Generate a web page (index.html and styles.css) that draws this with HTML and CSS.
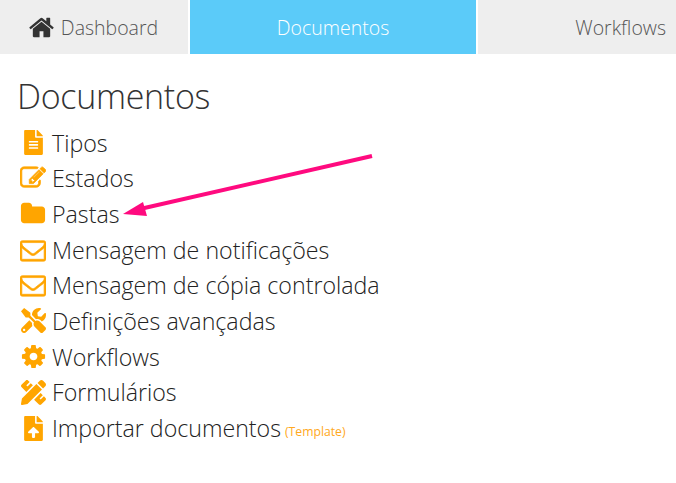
FILE: index.html
```html
<!DOCTYPE html>
<html lang="en">
<head>
  <meta charset="UTF-8" />
  <meta name="viewport" content="width=device-width, initial-scale=1.0" />
  <title>Documentos</title>
  <link rel="stylesheet" href="styles.css">
</head>
<body>
  <nav class="tabs">
    <a class="tab tab-first">
      <svg class="home-icon" viewBox="0 0 1792 1792"><path d="M1472 992v480q0 26-19 45t-45 19h-384v-384h-256v384h-384q-26 0-45-19t-19-45v-480q0-1 .5-3t.5-3l575-474 575 474q1 2 1 6zm223-69l-62 74q-8 9-21 11h-3q-13 0-21-7l-692-577-692 577q-12 8-24 7-13-2-21-11l-62-74q-8-10-7-23.5t11-21.5l719-599q32-26 76-26t76 26l244 204v-195q0-14 9-23t23-9h192q14 0 23 9t9 23v408l219 182q10 8 11 21.5t-7 23.5z"/></svg>
      Dashboard
    </a>
    <a class="tab active">Documentos</a>
    <a class="tab tab-last">Workflows</a>
  </nav>

  <div class="content">
    <h1>Documentos</h1>
    <ul class="menu">
      <li><span class="icon"><svg class="file" viewBox="0 0 384 512"><path d="M224 136V0H24C10.7 0 0 10.7 0 24v464c0 13.3 10.7 24 24 24h336c13.3 0 24-10.7 24-24V160H248c-13.2 0-24-10.8-24-24zm64 236c0 6.6-5.4 12-12 12H108c-6.6 0-12-5.4-12-12v-8c0-6.6 5.4-12 12-12h168c6.6 0 12 5.4 12 12v8zm0-64c0 6.6-5.4 12-12 12H108c-6.6 0-12-5.4-12-12v-8c0-6.6 5.4-12 12-12h168c6.6 0 12 5.4 12 12v8zm0-72v8c0 6.6-5.4 12-12 12H108c-6.6 0-12-5.4-12-12v-8c0-6.6 5.4-12 12-12h168c6.6 0 12 5.4 12 12zm96-114.1v6.1H256V0h6.1c6.4 0 12.5 2.5 17 7l97.9 98c4.5 4.5 7 10.6 7 16.9z"/></svg></span>Tipos</li>
      <li><span class="icon"><svg class="wide bold" viewBox="0 0 1792 1792"><path d="M888 1184l116-116-152-152-116 116v56h96v96h56zm440-720q-16-16-33 1l-350 350q-17 17-1 33t33-1l350-350q17-17 1-33zm80 594v190q0 119-84.5 203.5t-203.5 84.5h-832q-119 0-203.5-84.5t-84.5-203.5v-832q0-119 84.5-203.5t203.5-84.5h832q63 0 117 25 15 7 18 23 3 17-9 29l-49 49q-14 14-32 8-23-6-45-6h-832q-66 0-113 47t-47 113v832q0 66 47 113t113 47h832q66 0 113-47t47-113v-126q0-13 9-22l64-64q15-15 35-7t20 29zm-96-738l288 288-672 672h-288v-288zm444 132l-92 92-288-288 92-92q28-28 68-28t68 28l152 152q28 28 28 68t-28 68z"/></svg></span>Estados</li>
      <li><span class="icon"><svg class="wide" viewBox="0 0 1792 1792"><path d="M1728 608v704q0 92-66 158t-158 66h-1216q-92 0-158-66t-66-158v-960q0-92 66-158t158-66h320q92 0 158 66t66 158v32h672q92 0 158 66t66 158z"/></svg></span>Pastas</li>
      <li><span class="icon"><svg class="wide bold" viewBox="0 0 1792 1792"><path d="M1664 1504v-768q-32 36-69 66-268 206-426 338-51 43-83 67t-86.5 48.5-102.5 24.5h-2q-48 0-102.5-24.5t-86.5-48.5-83-67q-158-132-426-338-37-30-69-66v768q0 13 9.5 22.5t22.5 9.5h1472q13 0 22.5-9.5t9.5-22.5zm0-1051v-24.5l-.5-13-3-12.5-5.5-9-9-7.5-14-2.5h-1472q-13 0-22.5 9.5t-9.5 22.5q0 168 147 284 193 152 401 317 6 5 35 29.5t46 37.5 44.5 31.5 50.5 27.5 43 9h2q20 0 43-9t50.5-27.5 44.5-31.5 46-37.5 35-29.5q208-165 401-317 54-43 100.5-115.5t46.5-131.5zm128-37v1088q0 66-47 113t-113 47h-1472q-66 0-113-47t-47-113v-1088q0-66 47-113t113-47h1472q66 0 113 47t47 113z"/></svg></span>Mensagem de notificações</li>
      <li><span class="icon"><svg class="wide bold" viewBox="0 0 1792 1792"><path d="M1664 1504v-768q-32 36-69 66-268 206-426 338-51 43-83 67t-86.5 48.5-102.5 24.5h-2q-48 0-102.5-24.5t-86.5-48.5-83-67q-158-132-426-338-37-30-69-66v768q0 13 9.5 22.5t22.5 9.5h1472q13 0 22.5-9.5t9.5-22.5zm0-1051v-24.5l-.5-13-3-12.5-5.5-9-9-7.5-14-2.5h-1472q-13 0-22.5 9.5t-9.5 22.5q0 168 147 284 193 152 401 317 6 5 35 29.5t46 37.5 44.5 31.5 50.5 27.5 43 9h2q20 0 43-9t50.5-27.5 44.5-31.5 46-37.5 35-29.5q208-165 401-317 54-43 100.5-115.5t46.5-131.5zm128-37v1088q0 66-47 113t-113 47h-1472q-66 0-113-47t-47-113v-1088q0-66 47-113t113-47h1472q66 0 113 47t47 113z"/></svg></span>Mensagem de cópia controlada</li>
      <li><span class="icon"><svg class="file" viewBox="0 0 512 512"><path d="M501.1 395.7L384 278.6c-23.1-23.1-57.6-27.6-85.4-13.9L192 158.1V96L64 0 0 64l96 128h62.1l106.6 106.6c-13.6 27.8-9.2 62.3 13.9 85.4l117.1 117.1c14.6 14.6 38.2 14.6 52.7 0l52.7-52.7c14.5-14.6 14.5-38.2 0-52.7zM331.7 225c28.3 0 54.9 11 74.9 31l19.4 19.4c15.8-6.9 30.8-16.5 43.8-29.5 37.1-37.1 49.7-89.3 37.9-136.7-2.2-9-13.5-12.1-20.1-5.5l-74.4 74.4-67.9-11.3L334 98.9l74.4-74.4c6.6-6.6 3.4-17.9-5.7-20.2-47.4-11.7-99.6.9-136.6 37.9-28.5 28.5-41.9 66.1-41.2 103.6l82.1 82.1c8.1-1.9 16.5-2.9 24.7-2.9zm-103.9 82l-56.7-56.7L18.7 402.8c-25 25-25 65.5 0 90.5s65.5 25 90.5 0l123.6-123.6c-7.6-19.9-9.9-41.6-5-62.7zM64 472c-13.2 0-24-10.8-24-24 0-13.3 10.7-24 24-24s24 10.7 24 24c0 13.2-10.7 24-24 24z"/></svg></span>Definições avançadas</li>
      <li><span class="icon"><svg class="gear" viewBox="0 0 1792 1792"><path d="M1152 896q0-106-75-181t-181-75-181 75-75 181 75 181 181 75 181-75 75-181zm512-109v222q0 12-8 23t-20 13l-185 28q-19 54-39 91 35 50 107 138 10 12 10 25t-9 23q-27 37-99 108t-94 71q-12 0-26-9l-138-108q-44 23-91 38-16 136-29 186-7 28-36 28h-222q-14 0-24.5-8.5t-11.5-21.5l-28-184q-49-16-90-37l-141 107q-10 9-25 9-14 0-25-11-126-114-165-168-7-10-7-23 0-12 8-23 15-21 51-66.5t54-70.5q-27-50-41-99l-183-27q-13-2-21-12.5t-8-23.5v-222q0-12 8-23t19-13l186-28q14-46 39-92-40-57-107-138-10-12-10-24 0-10 9-23 26-36 98.5-107.5t94.5-71.5q13 0 26 10l138 107q44-23 91-38 16-136 29-186 7-28 36-28h222q14 0 24.5 8.5t11.5 21.5l28 184q49 16 90 37l142-107q9-9 24-9 13 0 25 10 129 119 165 170 7 8 7 22 0 12-8 23-15 21-51 66.5t-54 70.5q26 50 41 98l183 28q13 2 21 12.5t8 23.5z"/></svg></span>Workflows</li>
      <li><span class="icon"><svg class="file" viewBox="0 0 512 512"><path d="M109.46 244.04l134.58-134.56-44.12-44.12-61.68 61.68a7.919 7.919 0 0 1-11.21 0l-11.21-11.21c-3.1-3.1-3.1-8.12 0-11.21l61.68-61.68-33.64-33.65C131.47-3.1 111.39-3.1 99 9.29L9.29 99c-12.38 12.39-12.39 32.47 0 44.86l100.17 100.18zm388.47-116.8c18.76-18.76 18.75-49.17 0-67.93l-45.25-45.25c-18.76-18.76-49.18-18.76-67.95 0l-46.02 46.01 113.2 113.2 46.02-46.03zM316.08 82.71l-297 296.96L.32 487.11c-2.53 14.49 10.09 27.11 24.59 24.56l107.45-18.84L429.28 195.9 316.08 82.71zm186.63 285.43l-33.64-33.64-61.68 61.68c-3.1 3.1-8.12 3.1-11.21 0l-11.21-11.21c-3.09-3.1-3.09-8.12 0-11.21l61.68-61.68-44.14-44.14L267.93 402.5l100.21 100.2c12.39 12.39 32.47 12.39 44.86 0l89.71-89.7c12.39-12.39 12.39-32.47 0-44.86z"/></svg></span>Formulários</li>
      <li><span class="icon"><svg class="file" viewBox="0 0 384 512"><path d="M224 136V0H24C10.7 0 0 10.7 0 24v464c0 13.3 10.7 24 24 24h336c13.3 0 24-10.7 24-24V160H248c-13.2 0-24-10.8-24-24zm65.18 216.01H224v80c0 8.84-7.16 16-16 16h-32c-8.84 0-16-7.16-16-16v-80H94.82c-14.28 0-21.41-17.29-11.27-27.36l96.42-95.7c6.65-6.61 17.39-6.61 24.04 0l96.42 95.7c10.15 10.07 3.03 27.36-11.25 27.36zM377 105L279.1 7c-4.5-4.5-10.6-7-17-7H256v128h128v-6.1c0-6.3-2.5-12.4-7-16.9z"/></svg></span>Importar documentos<small class="note">(Template)</small></li>
    </ul>
  </div>

  <svg class="arrow" viewBox="0 0 676 483">
    <line x1="372" y1="156" x2="140" y2="209" />
    <polygon points="123,214 143,202 147,216" />
  </svg>
</body>
</html>
```

FILE: styles.css
```css
html, body {
  height: 100%;
}
body {
  font-family: "Open Sans", "Liberation Sans", sans-serif;
  font-weight: 300;
  background-color: #ffffff;
  color: #333333;
  margin: 0;
  overflow: hidden;
  position: relative;
}
.tabs {
  display: grid;
  grid-template-columns: 188px 286px 198px;
  column-gap: 2px;
  height: 54px;
}
.tab {
  display: flex;
  justify-content: center;
  align-items: center;
  font-size: 19.5px;
  background-color: #eeeeee;
  color: #555555;
}
.tab.active {
  background-color: #5bcbf9;
  color: #ffffff;
}
.tab-first {
  padding-right: 2px;
}
.tab-last {
  justify-content: flex-end;
  padding-right: 10px;
}
.home-icon {
  width: 27px;
  height: 27px;
  margin-right: 6px;
  fill: #333333;
}
.content {
  padding: 0 17px;
}
h1 {
  font-size: 34px;
  font-weight: 300;
  letter-spacing: -0.3px;
  line-height: 48px;
  margin: 18px 0 4.7px;
}
.menu {
  list-style: none;
  margin: 0;
  padding: 0;
}
.menu li {
  display: flex;
  align-items: center;
  height: 35.7px;
  font-size: 23.2px;
  white-space: pre;
  color: #222222;
}
.icon {
  display: flex;
  justify-content: center;
  align-items: center;
  width: 30px;
  margin-left: 1px;
  margin-right: 4px;
  fill: #ffa500;
}
.icon .file {
  height: 25px;
  width: 25px;
}
.icon .wide {
  height: 26px;
  width: 26px;
}
.icon .gear {
  height: 27px;
  width: 27px;
}
.icon .bold {
  stroke: #ffa500;
  stroke-width: 50;
}
.note {
  font-size: 12.2px;
  font-weight: 400;
  color: #ffa820;
  margin-left: 4px;
  margin-top: 6px;
}
.arrow {
  position: absolute;
  left: 0;
  top: 0;
  width: 676px;
  height: 483px;
  pointer-events: none;
}
.arrow line {
  stroke: #ff0a7f;
  stroke-width: 4;
}
.arrow polygon {
  fill: #ff0a7f;
}
```
